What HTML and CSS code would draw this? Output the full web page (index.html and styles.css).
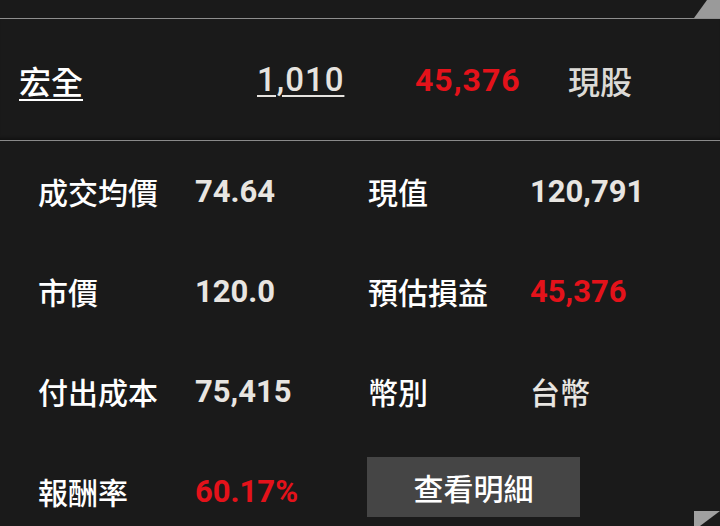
FILE: index.html
```html
<!DOCTYPE html>
<html lang="zh-Hant">
<head>
<meta charset="utf-8">
<link rel="stylesheet" href="styles.css">
</head>
<body>
<div class="screen">
  <div class="top-strip"></div>
  <div class="header">
    <span class="name">宏全</span>
    <span class="qty">1,010</span>
    <span class="pl red">45,376</span>
    <span class="kind">現股</span>
  </div>
  <div class="details">
    <span class="label">成交均價</span><span class="value">74.64</span>
    <span class="label">現值</span><span class="value">120,791</span>
    <span class="label">市價</span><span class="value">120.0</span>
    <span class="label">預估損益</span><span class="value red">45,376</span>
    <span class="label">付出成本</span><span class="value">75,415</span>
    <span class="label">幣別</span><span class="value cjk">台幣</span>
    <span class="label">報酬率</span><span class="value red">60.17%</span>
    <span class="btn-cell"><span class="btn">查看明細</span></span>
  </div>
  <svg class="corner corner-top" width="26" height="19" viewBox="0 0 26 19"><polygon points="0,18 26,18 26,0 13,0" fill="#9a9a9a"/></svg>
  <svg class="corner corner-bottom" width="26" height="15" viewBox="0 0 26 15"><polygon points="0,0 26,0 6,15 0,15" fill="#a0a0a0"/></svg>
</div>
</body>
</html>
```
FILE: styles.css
```css
html, body {
  margin: 0;
  padding: 0;
  background: #1a1a1a;
}
.screen {
  position: relative;
  width: 720px;
  height: 526px;
  overflow: hidden;
  background: #1a1a1a;
  font-family: "Noto Sans CJK TC", "Noto Sans", sans-serif;
  color: #ffffff;
}
.top-strip {
  height: 18px;
  border-bottom: 1px solid #8e8e8e;
}
.header {
  border-bottom: 1px solid #8a8a8a;
  box-shadow: inset 0 -4px 3px -2px #121212;
  display: grid;
  grid-template-columns: 238px 158px 153px 1fr;
  align-items: center;
  padding-left: 19px;
  box-sizing: border-box;
  height: 122px;
}
.name {
  font-size: 32px;
  font-weight: 500;
  line-height: 1;
  text-decoration: underline;
  text-decoration-thickness: 2px;
  text-underline-offset: 5px;
}
.qty {
  font-family: Roboto, "Liberation Sans", sans-serif;
  font-size: 33px;
  font-weight: 500;
  letter-spacing: 1px;
  color: #e6e3df;
  text-decoration: underline;
  text-decoration-thickness: 2px;
  text-underline-offset: 4px;
}
.pl {
  font-family: Roboto, "Liberation Sans", sans-serif;
  font-size: 32px;
  font-weight: 700;
  letter-spacing: 1px;
}
.kind {
  font-size: 32px;
  font-weight: 500;
  color: #dcdad6;
  line-height: 1;
}
.red {
  color: #e4121a;
}
.details {
  display: grid;
  grid-template-columns: 157px 173px 162px 1fr;
  grid-auto-rows: 100px;
  align-items: center;
  padding-left: 38px;
}
.label {
  font-size: 30px;
  font-weight: 500;
  color: #ffffff;
  line-height: 1;
}
.value {
  font-family: Roboto, "Liberation Sans", sans-serif;
  font-size: 31px;
  font-weight: 700;
  color: #e8e5e1;
  line-height: 1;
}
.value.red {
  color: #e4121a;
}
.value.cjk {
  font-family: "Noto Sans CJK TC", sans-serif;
  font-size: 30px;
  font-weight: 500;
}
.btn-cell {
  grid-column: 3 / span 2;
  display: flex;
  align-items: center;
  height: 100%;
  margin-left: -1px;
}
.btn {
  width: 213px;
  height: 60px;
  margin-top: -8px;
  background: #454545;
  color: #ffffff;
  font-size: 30px;
  font-weight: 500;
  display: flex;
  align-items: center;
  justify-content: center;
}
.corner {
  position: absolute;
  display: block;
}
.corner-top {
  right: 0;
  top: 0;
}
.corner-bottom {
  right: 0;
  bottom: 0;
}
```
